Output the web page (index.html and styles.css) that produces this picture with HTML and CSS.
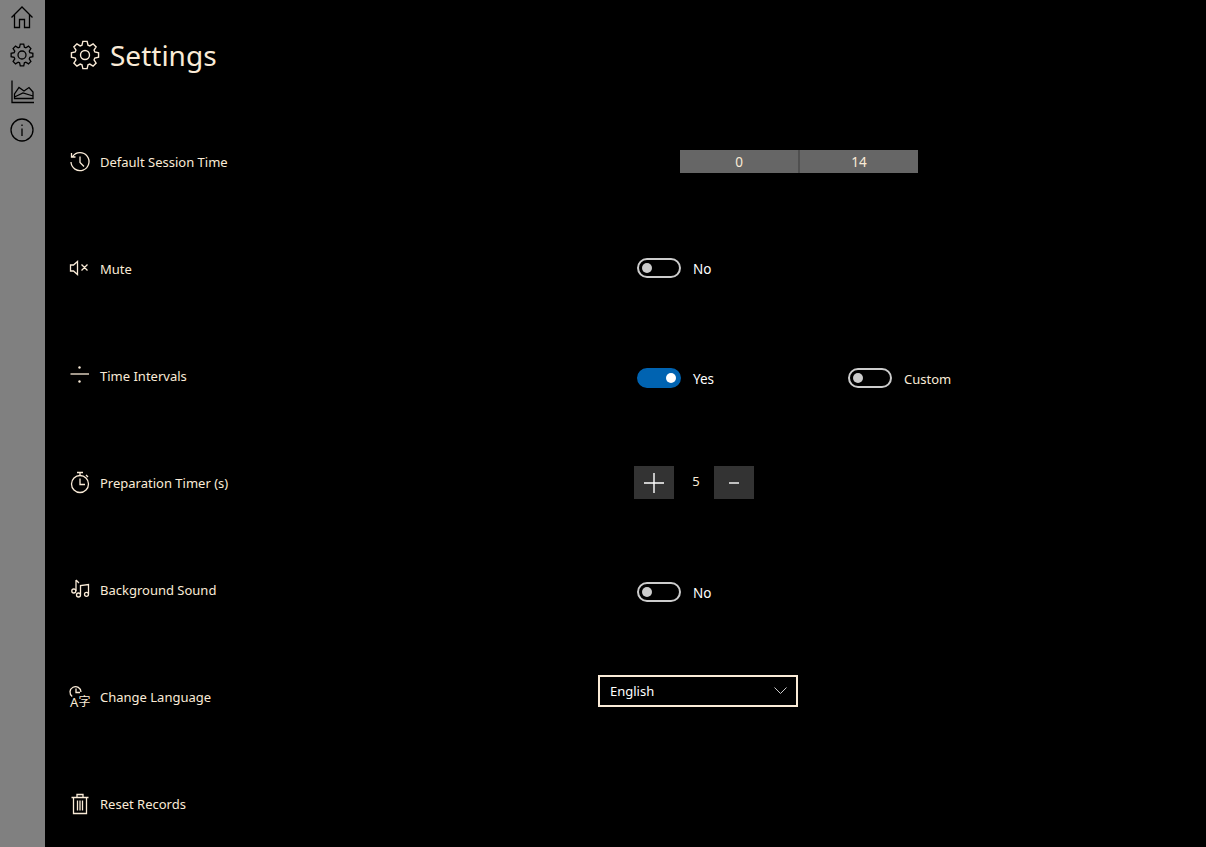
FILE: index.html
```html
<!doctype html>
<html lang="en">
<head>
    <meta charset="UTF-8">
    <title>Settings</title>
    <link rel="stylesheet" href="styles.css">
</head>
<body>
    <nav class="sidebar">
        <svg class="nav-icon" viewBox="0 0 24 24"><path d="M1.500 12.500 12 2l10.500 10.500M4.500 9.500V22.500H9.500V14.500H14.500V22.500H19.500V9.500"/></svg>
        <svg class="nav-icon" viewBox="0 0 24 24"><path d="M9.6 4.16 10.28 1.14H13.72L14.4 4.16 15.85 4.76 18.47 3.1 20.9 5.53 19.24 8.15 19.84 9.6 22.86 10.28V13.72L19.84 14.4 19.24 15.85 20.9 18.47 18.47 20.9 15.85 19.24 14.4 19.84 13.72 22.86H10.28L9.6 19.84 8.15 19.24 5.53 20.9 3.1 18.47 4.76 15.85 4.16 14.4 1.14 13.72V10.28L4.16 9.6 4.76 8.15 3.1 5.53 5.53 3.1 8.15 4.76Z"/><circle cx="12" cy="12" r="4"/></svg>
        <svg class="nav-icon" viewBox="0 0 24 24"><path d="M2 .5V22.500H24M4.500 18.500V14L9 7.500 14 11 19 7.500 23 12V18.500ZM4.500 17 13 13 23 16"/></svg>
        <svg class="nav-icon" viewBox="0 0 24 24"><circle cx="12" cy="12" r="11"/><path d="M12 10.500V18M12 6.500V8"/></svg>
    </nav>

    <main class="content">
        <h1 class="title">
            <svg class="title-icon" viewBox="0 0 24 24"><path d="M9.6 4.16 10.28 1.14H13.72L14.4 4.16 15.85 4.76 18.47 3.1 20.9 5.53 19.24 8.15 19.84 9.6 22.86 10.28V13.72L19.84 14.4 19.24 15.85 20.9 18.47 18.47 20.9 15.85 19.24 14.4 19.84 13.72 22.86H10.28L9.6 19.84 8.15 19.24 5.53 20.9 3.1 18.47 4.76 15.85 4.16 14.4 1.14 13.72V10.28L4.16 9.6 4.76 8.15 3.1 5.53 5.53 3.1 8.15 4.76Z"/><circle cx="12" cy="12" r="3.600"/></svg>
            Settings
        </h1>

        <div class="row">
            <div class="label">
                <svg class="icon" viewBox="0 0 20 20"><path d="M2.600 4.500A9 9 0 1 1 1 10M1.500 1V5H5.500M10 4.500V10.500L14 14.500"/></svg>
                Default Session Time
            </div>
            <div class="control time-control">
                <div class="time-part">0</div>
                <div class="time-part">14</div>
            </div>
        </div>

        <div class="row">
            <div class="label">
                <svg class="icon" viewBox="0 0 20 20"><path d="M.5 6H3.500L7.500 2.500V15.500L3.500 12H.5ZM11.500 5.500 17.500 11.500M17.500 5.500 11.500 11.500"/></svg>
                Mute
            </div>
            <div class="control toggle-control">
                <div class="toggle"><span class="knob"></span></div>
                <span class="toggle-text">No</span>
            </div>
        </div>

        <div class="row">
            <div class="label">
                <svg class="icon" viewBox="0 0 20 20"><path d="M.5 8H19"/><circle class="dot" cx="9.500" cy="1.500" r="1.200"/><circle class="dot" cx="9.500" cy="15.500" r="1.200"/></svg>
                Time Intervals
            </div>
            <div class="control toggle-control intervals">
                <div class="toggle on"><span class="knob"></span></div>
                <span class="toggle-text yes-text">Yes</span>
                <div class="toggle"><span class="knob"></span></div>
                <span class="custom-text">Custom</span>
            </div>
        </div>

        <div class="row">
            <div class="label">
                <svg class="icon" viewBox="0 0 20 20"><circle cx="10" cy="11" r="8.500"/><path d="M7 -.5H13M10 -.5V2.500M16 2 18 4M10 5.500V11.500H15"/></svg>
                Preparation Timer (s)
            </div>
            <div class="control stepper">
                <button class="step-btn"><svg class="plus" viewBox="0 0 20 20"><path d="M0 10H20M10 0V20"/></svg></button>
                <span class="step-value">5</span>
                <button class="step-btn"><svg class="minus" viewBox="0 0 10 2"><path d="M0 1H10"/></svg></button>
            </div>
        </div>

        <div class="row">
            <div class="label">
                <svg class="icon" viewBox="0 0 20 20"><path d="M6 0V11M6 0 9 3M10.500 14.500V5.500L18.500 4.500V14"/><circle cx="3.800" cy="11" r="2"/><circle cx="8.500" cy="15" r="2"/><circle cx="16.500" cy="14.300" r="2"/></svg>
                Background Sound
            </div>
            <div class="control toggle-control sound">
                <div class="toggle"><span class="knob"></span></div>
                <span class="toggle-text">No</span>
            </div>
        </div>

        <div class="row">
            <div class="label">
                <svg class="icon" viewBox="0 0 20 20"><path d="M2.200 9.500A5.500 5.500 0 1 1 11 5M6 1.500V5.500H10"/><text class="icon-text" x="0" y="19.500">A</text><text class="icon-text cjk" x="8.500" y="18.500">字</text></svg>
                Change Language
            </div>
            <div class="control language-control">
                <div class="select">
                    English
                    <svg class="chevron" viewBox="0 0 13 7"><path d="M.5 .5 6.500 6.500 12.500 .5"/></svg>
                </div>
            </div>
        </div>

        <div class="row">
            <div class="label">
                <svg class="icon" viewBox="0 0 20 20"><path d="M1.500 3.500H18.500M7 3.500V.5H13V3.500M3.500 3.500V19.500H16.500V3.500M7.500 6.500V16.500M10 6.500V16.500M12.500 6.500V16.500"/></svg>
                Reset Records
            </div>
        </div>
    </main>
</body>
</html>
```

FILE: styles.css
```css
html, body {
    height: 100%;
}
body {
    font-family: "Noto Sans", "Open Sans", sans-serif;
    font-size: 13px;
    background-color: #000;
    color: antiquewhite;
    margin: 0;
    display: flex;
    overflow: hidden;
}
svg {
    fill: none;
    stroke: currentColor;
    stroke-width: 1.4;
    flex: none;
    overflow: visible;
}
.sidebar {
    width: 44px;
    flex: none;
    background-color: #808080;
    color: #000;
    display: flex;
    flex-direction: column;
    align-items: center;
    gap: 13.5px;
    padding: 5px 1px 0 0;
}
.nav-icon {
    width: 24px;
    height: 24px;
    stroke-width: 1.3;
}
.content {
    flex: 1;
    padding-left: 25px;
}
.title {
    height: 108px;
    margin: 0;
    padding-top: 2px;
    box-sizing: border-box;
    display: flex;
    align-items: center;
    gap: 10px;
    font-size: 28px;
    font-weight: normal;
}
.title-icon {
    width: 30px;
    height: 30px;
    stroke-width: 1.1;
}
.row {
    height: 107px;
    display: grid;
    grid-template-columns: 528px 1fr;
    align-items: center;
}
.label {
    display: flex;
    align-items: center;
    gap: 10px;
}
.icon {
    width: 20px;
    height: 20px;
    stroke-width: 1.3;
}
.dot {
    fill: currentColor;
    stroke: none;
}
.icon-text {
    fill: currentColor;
    stroke: none;
    font-size: 13px;
}
.cjk {
    font-family: "Noto Sans CJK SC", sans-serif;
    font-size: 12px;
}
.control {
    display: flex;
    align-items: center;
}
.time-control {
    margin-left: 82px;
    width: 238px;
    height: 23px;
    margin-bottom: 1px;
}
.time-part {
    flex: 1;
    height: 100%;
    padding-top: 1px;
    box-sizing: border-box;
    background-color: #666;
    font-size: 13.5px;
    display: flex;
    align-items: center;
    justify-content: center;
}
.time-part + .time-part {
    border-left: 2px solid #505050;
}
.toggle-control {
    margin-left: 39px;
    margin-bottom: 1px;
}
.intervals {
    margin-bottom: -4px;
}
.sound {
    margin-bottom: -5px;
}
.toggle {
    width: 44px;
    height: 20px;
    box-sizing: border-box;
    border: 2px solid #ccc;
    border-radius: 10px;
    padding-left: 3px;
    display: flex;
    align-items: center;
}
.knob {
    width: 10px;
    height: 10px;
    border-radius: 50%;
    background-color: #ccc;
}
.toggle.on {
    background-color: #0063b1;
    border-color: #0063b1;
    justify-content: flex-end;
    padding: 0 3px 0 0;
}
.toggle.on .knob {
    background-color: #fff;
}
.toggle-text {
    color: #fff;
    font-size: 13.5px;
    margin-left: 12px;
    padding-top: 2px;
}
.yes-text {
    width: 155px;
}
.custom-text {
    margin-left: 12px;
    padding-top: 2px;
}
.stepper {
    margin-left: 36px;
}
.step-btn {
    width: 40px;
    height: 33px;
    padding: 0;
    border: none;
    background-color: #333;
    color: #fff;
    display: flex;
    align-items: center;
    justify-content: center;
}
.step-value {
    width: 40px;
    box-sizing: border-box;
    text-align: center;
    padding: 0 0 4px 4px;
}
.plus {
    width: 20px;
    height: 20px;
    stroke-width: 1.4;
}
.minus {
    width: 10px;
    height: 2px;
    stroke-width: 1.4;
}
.language-control {
    margin-bottom: 12px;
}
.select {
    width: 200px;
    height: 32px;
    box-sizing: border-box;
    border: 2px solid antiquewhite;
    padding: 0 9px 0 10px;
    color: #fff;
    display: flex;
    align-items: center;
    justify-content: space-between;
}
.chevron {
    width: 13px;
    height: 7px;
    stroke-width: 1;
    color: #ccc;
}
```
